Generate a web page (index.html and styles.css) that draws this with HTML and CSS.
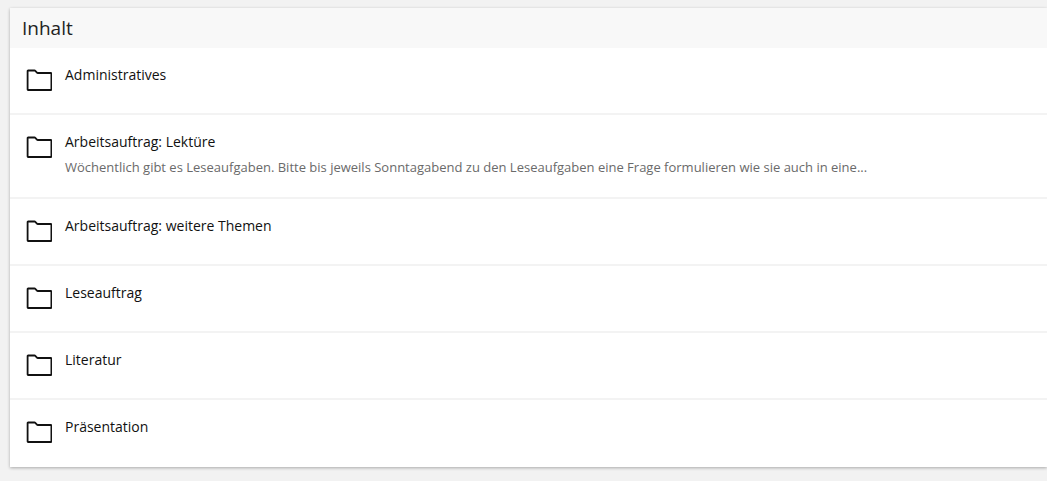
FILE: index.html
```html
<!DOCTYPE html>
<html lang="de">
<head>
<meta charset="utf-8">
<title>Inhalt</title>
<link rel="stylesheet" href="styles.css">
</head>
<body>
<main class="card">
  <h2 class="card-title">Inhalt</h2>
  <ul class="list">
    <li class="item">
      <svg class="folder" viewBox="0 0 26 22" aria-hidden="true"><path d="M1.6 2C1.6 1.7 1.8 1.5 2.1 1.5H8.6C8.9 1.5 9.1 1.6 9.3 1.8L11.2 3.8C11.3 3.9 11.5 4 11.7 4H24.9C25.2 4 25.4 4.2 25.4 4.5V20.5C25.4 20.8 25.2 21 24.9 21H2.1C1.8 21 1.6 20.8 1.6 20.5Z"/></svg>
      <div class="item-body"><div class="item-title">Administratives</div></div>
    </li>
    <li class="item">
      <svg class="folder" viewBox="0 0 26 22" aria-hidden="true"><path d="M1.6 2C1.6 1.7 1.8 1.5 2.1 1.5H8.6C8.9 1.5 9.1 1.6 9.3 1.8L11.2 3.8C11.3 3.9 11.5 4 11.7 4H24.9C25.2 4 25.4 4.2 25.4 4.5V20.5C25.4 20.8 25.2 21 24.9 21H2.1C1.8 21 1.6 20.8 1.6 20.5Z"/></svg>
      <div class="item-body">
        <div class="item-title">Arbeitsauftrag: Lektüre</div>
        <div class="item-desc">Wöchentlich gibt es Leseaufgaben. Bitte bis jeweils Sonntagabend zu den Leseaufgaben eine Frage formulieren wie sie auch in eine...</div>
      </div>
    </li>
    <li class="item">
      <svg class="folder" viewBox="0 0 26 22" aria-hidden="true"><path d="M1.6 2C1.6 1.7 1.8 1.5 2.1 1.5H8.6C8.9 1.5 9.1 1.6 9.3 1.8L11.2 3.8C11.3 3.9 11.5 4 11.7 4H24.9C25.2 4 25.4 4.2 25.4 4.5V20.5C25.4 20.8 25.2 21 24.9 21H2.1C1.8 21 1.6 20.8 1.6 20.5Z"/></svg>
      <div class="item-body"><div class="item-title">Arbeitsauftrag: weitere Themen</div></div>
    </li>
    <li class="item">
      <svg class="folder" viewBox="0 0 26 22" aria-hidden="true"><path d="M1.6 2C1.6 1.7 1.8 1.5 2.1 1.5H8.6C8.9 1.5 9.1 1.6 9.3 1.8L11.2 3.8C11.3 3.9 11.5 4 11.7 4H24.9C25.2 4 25.4 4.2 25.4 4.5V20.5C25.4 20.8 25.2 21 24.9 21H2.1C1.8 21 1.6 20.8 1.6 20.5Z"/></svg>
      <div class="item-body"><div class="item-title">Leseauftrag</div></div>
    </li>
    <li class="item">
      <svg class="folder" viewBox="0 0 26 22" aria-hidden="true"><path d="M1.6 2C1.6 1.7 1.8 1.5 2.1 1.5H8.6C8.9 1.5 9.1 1.6 9.3 1.8L11.2 3.8C11.3 3.9 11.5 4 11.7 4H24.9C25.2 4 25.4 4.2 25.4 4.5V20.5C25.4 20.8 25.2 21 24.9 21H2.1C1.8 21 1.6 20.8 1.6 20.5Z"/></svg>
      <div class="item-body"><div class="item-title">Literatur</div></div>
    </li>
    <li class="item">
      <svg class="folder" viewBox="0 0 26 22" aria-hidden="true"><path d="M1.6 2C1.6 1.7 1.8 1.5 2.1 1.5H8.6C8.9 1.5 9.1 1.6 9.3 1.8L11.2 3.8C11.3 3.9 11.5 4 11.7 4H24.9C25.2 4 25.4 4.2 25.4 4.5V20.5C25.4 20.8 25.2 21 24.9 21H2.1C1.8 21 1.6 20.8 1.6 20.5Z"/></svg>
      <div class="item-body"><div class="item-title">Präsentation</div></div>
    </li>
  </ul>
</main>
</body>
</html>
```
FILE: styles.css
```css
html, body { margin: 0; padding: 0; height: 100%; overflow: hidden; }
body {
  background: #f2f2f2;
  font-family: "Open Sans", "Liberation Sans", sans-serif;
  color: #161616;
  padding: 8px 0 0 10px;
  box-sizing: border-box;
}
.card {
  background: #fff;
  box-shadow: 0 1px 3px rgba(0, 0, 0, 0.3);
}
.card-title {
  margin: 0;
  height: 40px;
  padding: 0 12px;
  background: #f8f8f8;
  font-size: 19px;
  font-weight: 400;
  line-height: 40px;
  color: #222;
}
.list { list-style: none; margin: 0; padding: 0; }
.item {
  display: flex;
  align-items: flex-start;
  gap: 13px;
  padding: 0 16px;
  box-sizing: border-box;
  border-bottom: 2px solid #f3f3f3;
  height: 67px;
}
.item:nth-child(2) { height: 84px; }
.item:last-child { border-bottom: 0; height: 67px; }
.folder {
  flex: none;
  width: 26px;
  height: 22px;
  margin-top: 21px;
  fill: none;
  stroke: #111;
  stroke-width: 1.8;
}
.item-body { padding-top: 17px; min-width: 0; }
.item-title { font-size: 14px; line-height: 20px; color: #111; }
.item-desc { font-size: 13px; line-height: 16px; margin-top: 7px; color: #6a6a6a; white-space: nowrap; }
```
